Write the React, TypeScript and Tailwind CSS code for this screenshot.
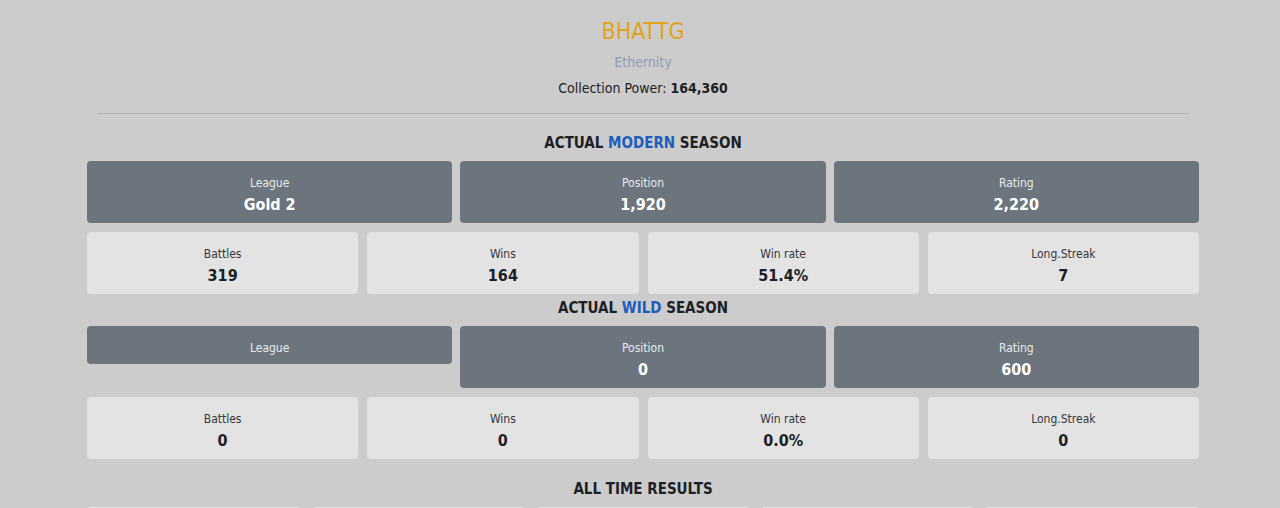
const modern = {
  top: [
    { label: "League", value: "Gold 2" },
    { label: "Position", value: "1,920" },
    { label: "Rating", value: "2,220" },
  ],
  bottom: [
    { label: "Battles", value: "319" },
    { label: "Wins", value: "164" },
    { label: "Win rate", value: "51.4%" },
    { label: "Long.Streak", value: "7" },
  ],
};

const wild = {
  top: [
    { label: "League", value: "" },
    { label: "Position", value: "0" },
    { label: "Rating", value: "600" },
  ],
  bottom: [
    { label: "Battles", value: "0" },
    { label: "Wins", value: "0" },
    { label: "Win rate", value: "0.0%" },
    { label: "Long.Streak", value: "0" },
  ],
};

type Stat = { label: string; value: string };

function Season({ name, data }: { name: string; data: { top: Stat[]; bottom: Stat[] } }) {
  return (
    <div className="pt-[4px]">
      <h5 className="text-[15px] leading-[20px] font-semibold text-[#1c1f24]">
        ACTUAL <span className="text-[#1f5cc0]">{name}</span> SEASON
      </h5>
      <div className="grid grid-cols-3 gap-[8px] items-start mt-[8px]">
        {data.top.map((s) => (
          <div key={s.label} className="rounded-[4px] bg-[#6c757d] text-white pt-[14px] pb-[8px]">
            <div className="text-[12px] leading-[16px] text-[#e6ecef]">{s.label}</div>
            {s.value && <div className="text-[16px] leading-[20px] font-semibold mt-[4px]">{s.value}</div>}
          </div>
        ))}
      </div>
      <div className="grid grid-cols-4 gap-[9px] mt-[9px]">
        {data.bottom.map((s) => (
          <div key={s.label} className="rounded-[4px] bg-[#e3e3e3] text-[#1c1f24] pt-[14px] pb-[8px]">
            <div className="text-[12px] leading-[16px] text-[#33373c]">{s.label}</div>
            <div className="text-[16px] leading-[20px] font-semibold mt-[4px]">{s.value}</div>
          </div>
        ))}
      </div>
    </div>
  );
}

export default function App() {
  return (
    <div
      className="min-h-screen bg-[#cccccc] overflow-hidden"
      style={{ fontFamily: '"DejaVu Sans Condensed", "Liberation Sans Narrow", sans-serif' }}
    >
      <div className="ml-[87px] w-[1112px] text-center">
        <div className="pt-[16px]">
          <h2 className="text-[23px] leading-[30px] font-light text-[#e3a21a]">BHATTG</h2>
          <div className="text-[14px] leading-[20px] text-[#8d9cb5] mt-[6px]">Ethernity</div>
          <div className="text-[14px] leading-[20px] text-[#1c1f24] mt-[6px]">
            Collection Power: <span className="font-semibold">164,360</span>
          </div>
        </div>
        <hr className="mx-[10px] mt-[15px] border-t border-[#b3b3b3]" />
        <div className="mt-[15px]">
          <Season name="MODERN" data={modern} />
        </div>
        <Season name="WILD" data={wild} />
        <h5 className="text-[15px] leading-[20px] font-semibold text-[#1c1f24] mt-[20px]">ALL TIME RESULTS</h5>
        <div className="grid grid-cols-5 gap-[11px] mt-[8px]">
          {["Battles", "Wins", "Win rate", "Long.Streak", "Rating"].map((l) => (
            <div key={l} className="rounded-[4px] bg-[#e3e3e3] h-[62px]" />
          ))}
        </div>
      </div>
    </div>
  );
}
